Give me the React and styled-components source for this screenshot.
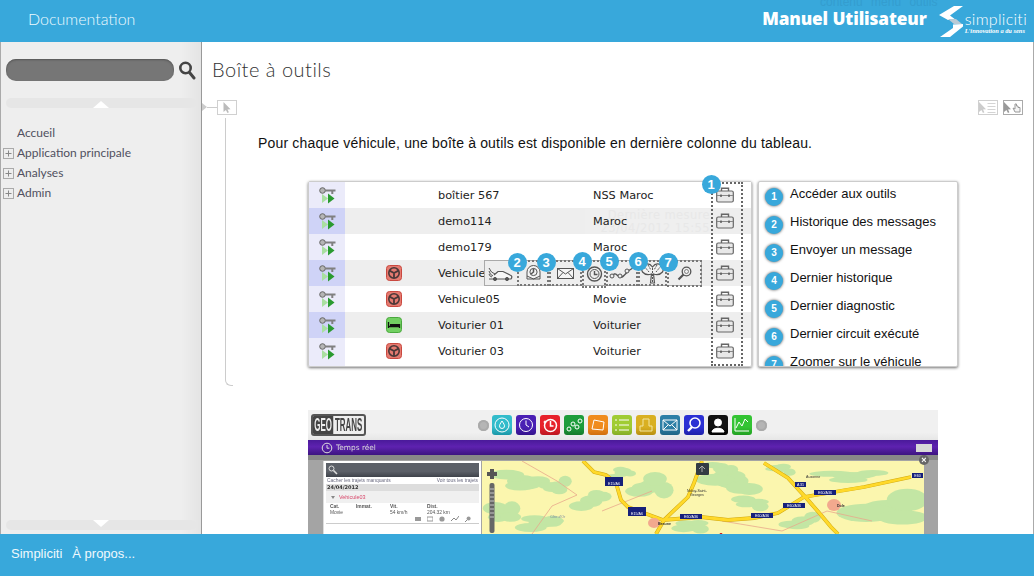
import React from 'react';
import styled, { createGlobalStyle } from 'styled-components';

const BLUE = '#38a8db';
const THIN = '"Lato", "Noto Sans", sans-serif';

const GlobalStyle = createGlobalStyle`
html, body { margin: 0; padding: 0; background: #fff; }
* { box-sizing: border-box; }
`;

const Page = styled.div`
display: flex;
flex-direction: column;
width: 1034px;
height: 576px;
overflow: hidden;
font-family: "Liberation Sans", Arial, sans-serif;
`;

const Header = styled.header`
position: relative;
display: flex;
align-items: center;
flex: 0 0 42px;
padding-left: 28px;
background: ${BLUE};
color: #fff;
overflow: hidden;
`;
const DocTitle = styled.div`
font-family: ${THIN};
font-weight: 300;
font-size: 16px;
margin-top: -6px;
color: #eefaff;
`;
const GhostTabs = styled.div`
position: absolute;
left: 820px;
top: -5px;
font-size: 12px;
word-spacing: 5px;
color: #349dcf;
`;
const Brand = styled.div`
position: relative;
display: flex;
align-items: center;
margin-left: auto;
padding-right: 7px;
`;
const ManualTitle = styled.div`
font-family: "Open Sans", sans-serif;
font-weight: 800;
font-size: 17.2px;
letter-spacing: -.1px;
margin-right: 12px;
margin-top: -6px;
white-space: nowrap;
`;
const BrandText = styled.div`
display: flex;
flex-direction: column;
margin-left: 2px;
`;
const BrandName = styled.div`
font-family: ${THIN};
font-weight: 300;
font-size: 16px;
line-height: 17px;
letter-spacing: .3px;
margin-top: 1px;
`;
const BrandTag = styled.div`
font-family: "Liberation Serif", serif;
font-style: italic;
font-weight: bold;
font-size: 6.4px;
line-height: 7px;
`;

const Main = styled.div`
display: flex;
flex: 1;
min-height: 0;
`;

const Sidebar = styled.aside`
display: flex;
flex-direction: column;
flex: 0 0 202px;
padding: 17px 5px 4px;
border-left: 1px solid #aaa;
border-right: 1px solid #999;
background: linear-gradient(to right, #eee 90%, #e4e4e4 100%);
`;
const SearchRow = styled.div`
display: flex;
align-items: center;
gap: 4px;
`;
const SearchInput = styled.div`
width: 168px;
height: 22px;
border-radius: 10px;
background: #767676;
box-shadow: inset 0 1px 2px #555;
`;
const ScrollBar = styled.div`
display: flex;
justify-content: center;
align-items: ${p => (p.$down ? 'flex-start' : 'flex-end')};
width: 190px;
height: 10px;
margin-top: ${p => (p.$down ? 'auto' : '17px')};
border-radius: 5px;
background: #e6e6e6;
`;
const Arrow = styled.div`
width: 0;
height: 0;
border-left: 8px solid transparent;
border-right: 8px solid transparent;
${p => (p.$down ? 'border-top: 7px solid #fff;' : 'border-bottom: 7px solid #fff;')}
`;
const Nav = styled.nav`
display: flex;
flex-direction: column;
margin: 14px 0 0 -3px;
`;
const NavItem = styled.div`
display: flex;
align-items: center;
height: 20px;
font-family: ${THIN};
font-size: 12px;
color: #505060;
`;
const PlusSlot = styled.span`
display: flex;
flex: 0 0 14px;
padding-top: 2px;
`;

const Content = styled.main`
flex: 1;
min-width: 0;
overflow: hidden;
border-right: 1px solid #aaa;
background: #fff;
`;
const PageTitle = styled.h1`
margin: 13px 0 17px 10px;
font-family: ${THIN};
font-weight: 300;
font-size: 20px;
line-height: 28px;
letter-spacing: .5px;
color: #333;
`;
const StepHead = styled.div`
display: flex;
align-items: flex-start;
height: 16px;
padding-right: 10px;
`;
const Notch = styled.div`
width: 0;
height: 0;
margin-top: 3px;
border-top: 4px solid transparent;
border-bottom: 4px solid transparent;
border-left: 5px solid #ccc;
`;
const NotchLine = styled.div`
width: 10px;
height: 1px;
margin-top: 7px;
background: #ccc;
`;
const CursorBox = styled.div`
display: flex;
align-items: center;
justify-content: center;
width: 20px;
height: 15px;
border: 1px solid ${p => p.$strong ? '#aaa' : '#d0d0d0'};
`;
const StepTools = styled.div`
display: flex;
gap: 5px;
margin-left: auto;
`;
const StepBody = styled.div`
display: flex;
margin: 2px 0 0 23px;
`;
const Rail = styled.div`
flex: 0 0 8px;
border-left: 1px solid #ccc;
border-bottom: 1px solid #ccc;
border-bottom-left-radius: 6px;
`;
const StepContent = styled.div`
flex: 1;
padding: 16px 0 19px 25px;
`;
const Lead = styled.p`
margin: 0 0 29px;
font-size: 14px;
line-height: 18px;
letter-spacing: .17px;
color: #111;
`;
const Figure = styled.div`
display: flex;
gap: 6px;
margin-left: 50px;
`;

const TableCard = styled.div`
position: relative;
width: 444px;
height: 186px;
border: 1px solid #ccc;
border-radius: 2px;
box-shadow: 0 1px 3px rgba(0,0,0,.55);
background: linear-gradient(to right, #ebebfa 36px, #fff 36px);
font-family: "DejaVu Sans", Verdana, sans-serif;
font-size: 11.3px;
color: #222;
`;
const Row = styled.div`
display: grid;
grid-template-columns: 36px 93px 155px 118px 40px;
align-items: center;
height: 26px;
background: ${p => (p.$even ? '#eee' : '#fff')};
`;
const KeyCell = styled.div`
display: flex;
align-items: center;
justify-content: center;
height: 100%;
background: ${p => (p.$even ? '#cfd3f7' : '#ebebfa')};
`;
const StatusCell = styled.div`
display: flex;
padding-left: 41px;
`;
const TextCell = styled.div`
position: relative;
z-index: 1;
white-space: nowrap;
`;
const ToolboxCell = styled.div`
display: flex;
padding-left: 5px;
`;
const GhostTip = styled.div`
position: absolute;
left: 276px;
top: 27px;
width: 128px;
padding-right: 3px;
font-size: 11.5px;
line-height: 12.5px;
letter-spacing: .4px;
text-align: right;
color: #e8e8e8;
background: #efefef;
white-space: nowrap;
overflow: hidden;
`;
const DottedColumn = styled.div`
position: absolute;
left: 402px;
top: 0;
bottom: 0;
width: 32px;
z-index: 2;
border: 2px dotted #666;
`;
const Bubble = styled.div`
position: absolute;
left: ${p => p.$dx}px;
top: ${p => p.$dy}px;
display: flex;
align-items: center;
justify-content: center;
width: 19px;
height: 19px;
border-radius: 50%;
background: ${BLUE};
color: #fff;
font-family: "Liberation Sans", sans-serif;
font-weight: bold;
font-size: 13px;
z-index: 5;
`;
const ToolPopup = styled.div`
position: absolute;
left: 175px;
top: 78px;
display: flex;
width: 218px;
height: 26px;
z-index: 3;
background: #eee;
box-shadow: inset 0 0 0 1px #aaa;
`;
const ToolCell = styled.div`
position: relative;
display: flex;
align-items: center;
justify-content: center;
flex: 0 0 ${p => p.$w}px;
height: ${p => p.$h || 26}px;
border: ${p => (p.$plain ? 'none' : '2px dotted #777')};
`;

const LegendCard = styled.div`
width: 200px;
height: 186px;
overflow: hidden;
padding-left: 6px;
border: 1px solid #ccc;
border-radius: 2px;
box-shadow: 0 1px 3px rgba(0,0,0,.55);
background: #fff;
`;
const LegendRow = styled.div`
display: flex;
gap: 7px;
height: 28px;
padding-top: 4px;
font-size: 13px;
line-height: 16px;
color: #111;
white-space: nowrap;
`;
const LegendBadge = styled.span`
display: flex;
align-items: center;
justify-content: center;
flex: 0 0 18px;
height: 18px;
margin-top: 2px;
border-radius: 50%;
background: ${BLUE};
box-shadow: 0 0 3px rgba(0,0,0,.7);
color: #fff;
font-weight: bold;
font-size: 10px;
`;

const Shot = styled.div`
width: 630px;
margin: 24px 0 0 106px;
filter: blur(.35px);
`;
const ShotBar = styled.div`
display: flex;
align-items: center;
height: 30px;
padding-left: 3px;
background: linear-gradient(#f0f0f0 75%, #e6e6e6);
`;
const GeoLogo = styled.div`
flex: 0 0 55px;
height: 22px;
overflow: hidden;
border: 2px solid #555;
border-radius: 3px;
background: #eee;
`;
const GeoWord = styled.div`
display: flex;
width: 120px;
transform: scaleX(.44);
transform-origin: left center;
font-family: "Liberation Sans", sans-serif;
font-weight: bold;
font-size: 18px;
line-height: 18px;
color: #444;
`;
const GeoBadge = styled.span`
background: #444;
color: #eee;
padding: 0 3px;
margin-right: 4px;
`;
const ShotNav = styled.div`
flex: 0 0 11px;
height: 11px;
margin: ${p => p.$margin};
border-radius: 50%;
background: #b5b5b5;
box-shadow: inset 0 0 0 2px #aaa;
`;
const TileRow = styled.div`
display: flex;
gap: 4px;
`;
const Tile = styled.div`
display: flex;
align-items: center;
justify-content: center;
width: 20px;
height: 20px;
border-radius: 3px;
background: linear-gradient(${p => p.$color} 60%, ${p => p.$dark});
`;
const ShotTitle = styled.div`
display: flex;
align-items: center;
gap: 3px;
height: 15px;
padding: 0 6px 0 13px;
background: linear-gradient(#4a1a9a, #5e22b0 45%, #3c1480);
color: #ddd;
font-family: "DejaVu Sans", sans-serif;
font-size: 7.4px;
`;
const ShotButton = styled.div`
width: 16px;
height: 8px;
margin-left: auto;
background: #d8d8d8;
`;
const ShotBody = styled.div`
position: relative;
display: flex;
height: 90px;
padding: 6px 0 0 15px;
background: linear-gradient(#888 5px, #a4a4a4 5px);
`;
const CloseDot = styled.div`
position: absolute;
right: 9px;
top: 0;
display: flex;
align-items: center;
justify-content: center;
width: 10px;
height: 10px;
border-radius: 50%;
background: #666;
color: #fff;
font-size: 9px;
font-weight: bold;
`;
const Panel = styled.div`
flex: 0 0 158px;
padding: 2px;
background: #fff;
border-left: 1px solid #ddd;
color: #555;
font-family: "Liberation Sans", sans-serif;
font-size: 4.9px;
`;
const PanelHead = styled.div`
display: flex;
align-items: center;
height: 14px;
padding-left: 2px;
background: linear-gradient(#5c6068 60%, #3f434b);
`;
const PanelLinks = styled.div`
display: flex;
justify-content: space-between;
padding: 1px 1px 0;
height: 7px;
color: #6a6a80;
`;
const PanelDate = styled.div`
height: 7px;
padding-left: 1px;
background: #ddd;
font-family: "DejaVu Sans", sans-serif;
font-weight: bold;
font-size: 5px;
line-height: 7px;
color: #333;
`;
const PanelVehicle = styled.div`
display: flex;
align-items: center;
gap: 4px;
height: 12px;
padding-left: 5px;
background: #f0f0f0;
font-size: 5.4px;
color: #d8476a;
&::before {
  content: "";
  border-left: 2px solid transparent;
  border-right: 2px solid transparent;
  border-top: 3px solid #888;
}
`;
const PanelCols = styled.div`
display: grid;
grid-template-columns: 26px 34px 37px 1fr;
padding: 1px 4px;
line-height: 5.5px;
`;
const PanelIcons = styled.div`
display: flex;
justify-content: flex-end;
gap: 6px;
height: 8px;
padding-right: 8px;
border-bottom: 1px solid #ccc;
`;
const MapFrame = styled.div`
flex: 0 0 442px;
margin-left: 1px;
`;

const Footer = styled.footer`
display: flex;
align-items: center;
gap: 10px;
flex: 0 0 42px;
padding: 0 0 4px 11px;
background: ${BLUE};
color: #f0f9fd;
font-size: 13px;
`;

const Search = () => (
  <svg width="18" height="20" viewBox="0 0 18 20">
    <circle cx="7.5" cy="8" r="5.2" fill="none" stroke="#444" strokeWidth="2.6" />
    <path d="M11.5 12.5 16 18" stroke="#444" strokeWidth="3" strokeLinecap="round" />
  </svg>
);
const Plus = () => (
  <svg width="11" height="11" viewBox="0 0 11 11">
    <rect x=".5" y=".5" width="10" height="10" fill="none" stroke="#aaa" />
    <path d="M2.5 5.5h6M5.5 2.5v6" stroke="#888" />
  </svg>
);
const Cursor = ({ fill = '#bbb' }) => (
  <path d="M0 0 L0 10 L2.4 8 L4 11 L5.4 10.3 L4 7.4 L7 7.2 Z" fill={fill} />
);
const CursorIcon = () => (
  <svg width="9" height="12" viewBox="0 0 8 12"><Cursor /></svg>
);
const CursorList = () => (
  <svg width="18" height="12" viewBox="0 0 18 12">
    <Cursor fill="#ccc" />
    <path d="M8.5 1.5h8M8.5 4.5h8M8.5 7.5h8M8.5 10.5h8" stroke="#d4d4d4" />
  </svg>
);
const CursorHand = () => (
  <svg width="18" height="12" viewBox="0 0 18 12">
    <Cursor fill="#999" />
    <path d="M11 2v5l-2-1 2 4h5V5.5h-2V4h-1.5V2z" fill="#f4f4f4" stroke="#999" />
  </svg>
);
const SLogo = () => (
  <svg width="24" height="31" viewBox="0 0 24 31">
    <path d="M15 0 H24 L11 9.5 L17 14 H9 L0 9 Z" fill="#fff" />
    <path d="M9 13 H17 L23 18 H15 Z" fill="#b9cbd6" />
    <path d="M24 18 V20.5 L11 31 H1 L14 22 L14 18.5 Z" fill="#fff" />
  </svg>
);

const KeyIcon = () => (
  <svg width="17" height="17" viewBox="0 0 17 17">
    <path d="M3 7 L9 11.5 L3 16Z" fill="#a9e0a0" />
    <path d="M9 6.5 L15.5 11.5 L9 16.5Z" fill="#2a9a30" />
    <circle cx="3.5" cy="3.5" r="2.8" fill="#b5b5b5" stroke="#666" />
    <path d="M6 2.6h10.5v2h-2.2v2.4h-2V4.6H6z" fill="#808080" />
  </svg>
);
const Wheel = () => (
  <svg width="16" height="16" viewBox="0 0 16 16">
    <rect x=".5" y=".5" width="15" height="15" rx="3" fill="#e57a70" stroke="#c9483f" />
    <circle cx="8" cy="8" r="5.2" fill="none" stroke="#4a3838" strokeWidth="1.6" />
    <path d="M8 8V13M8 8 3.4 5.6M8 8 12.6 5.6" stroke="#4a3838" strokeWidth="1.8" />
  </svg>
);
const Bed = () => (
  <svg width="16" height="16" viewBox="0 0 16 16">
    <rect x=".5" y=".5" width="15" height="15" rx="3" fill="#72d062" stroke="#4aa83e" />
    <path d="M2.5 5v6M13.5 7v4M2.5 9.5h11" stroke="#111" strokeWidth="1.3" fill="none" />
    <rect x="4" y="7" width="9" height="2" fill="#111" />
  </svg>
);
const Toolbox = () => (
  <svg width="18" height="16" viewBox="0 0 18 16">
    <path d="M5.5 4V1.2h7V4" fill="none" stroke="#666" strokeWidth="1.4" />
    <rect x=".7" y="4" width="16.6" height="11" rx="1.5" fill="#e8e8e8" stroke="#666" strokeWidth="1.2" />
    <path d="M1 8.5h16" stroke="#888" />
    <path d="M5 7.5v2.5M13 7.5v2.5" stroke="#555" strokeWidth="1.4" />
  </svg>
);

const ToolSvg = ({ w = 20, h = 16, children }) => (
  <svg width={w} height={h} viewBox={`0 0 ${w} ${h}`} fill="none" stroke="#555" strokeWidth="1">
    {children}
  </svg>
);
const CarIcon = () => (
  <ToolSvg w={25} h={15}>
    <path d="M1 13 H23 Q25 10 22 9 L15 5.5 H10 L6 9" fill="#f6f6f6" strokeWidth="1.2" />
    <circle cx="7" cy="13" r="1.6" fill="#555" />
    <circle cx="19" cy="13" r="1.6" fill="#555" />
    <path d="M1 2 Q3 7 7 8M1 5 Q2 9 5 10M1 8 Q2 11 4 11" />
  </ToolSvg>
);
const DialIcon = () => (
  <ToolSvg w={15} h={16}>
    <path d="M1 14 V7 A6.5 6.5 0 0 1 14 7 V14 Z" fill="#f4f4f4" />
    <circle cx="7.5" cy="7" r="3.6" />
    <path d="M7.5 3.5V7L5 9" strokeWidth="1.5" />
    <path d="M1 11 L7.5 14 L14 11" />
  </ToolSvg>
);
const MailIcon = () => (
  <ToolSvg w={17} h={11}>
    <rect x=".5" y=".5" width="16" height="10" fill="#f6f6f6" />
    <path d="M.5 .5 8.5 6 16.5 .5M.5 10.5 6 4.5M16.5 10.5 11 4.5" />
  </ToolSvg>
);
const ClockIcon = () => (
  <ToolSvg w={17} h={16}>
    <circle cx="8.5" cy="8" r="7" strokeWidth="1.4" />
    <circle cx="8.5" cy="8" r="4.5" />
    <path d="M8.5 5v3.5h3" strokeWidth="1.4" />
  </ToolSvg>
);
const TrackIcon = () => (
  <ToolSvg w={26} h={14}>
    <path d="M3 11 Q5 6 8 9 T13 11 T19 5 L24 2" strokeWidth="1.4" />
    <circle cx="3" cy="10" r="2" fill="#eee" />
    <circle cx="11" cy="10" r="2" fill="#eee" />
    <circle cx="18" cy="5" r="2" fill="#eee" />
  </ToolSvg>
);
const RoadIcon = () => (
  <ToolSvg w={25} h={22}>
    <path d="M10.5 21 L11.5 12 Q6 14 2.5 10 Q0 5 4 3 Q9 0 12.5 5 Q16 0 21 3 Q25 5 22.5 10 Q19 14 13.5 12 L14.5 21Z" fill="#f2f2f2" strokeWidth="1.2" />
    <path d="M4 4 9 10M8 3 11 8M21 4 16 10M17 3 14 8M12.5 6V20" strokeDasharray="2 1" />
  </ToolSvg>
);
const LensIcon = () => (
  <ToolSvg w={15} h={15}>
    <circle cx="9.5" cy="5.5" r="4.3" strokeWidth="1.3" />
    <circle cx="9.5" cy="5.5" r="2" strokeWidth=".7" />
    <path d="M6.5 8.5 1.5 13.5" strokeWidth="2.2" />
  </ToolSvg>
);

const TILE_ICONS = {
  gauge: <><circle cx="9" cy="9" r="7" /><path d="M9 5c-2 3-2.5 4-2.5 5a2.5 2.5 0 0 0 5 0c0-1-.5-2-2.5-5z" /></>,
  clock: <><circle cx="9" cy="9" r="6.5" /><path d="M9 4.5V9l3 2" /></>,
  history: <><circle cx="9.5" cy="9.5" r="6" strokeWidth="1.5" /><path d="M9.5 5v5h3" strokeWidth="1.5" /><circle cx="4" cy="6" r="1" fill="#fff" /></>,
  graph: <><circle cx="4" cy="13" r="2" /><circle cx="8" cy="8" r="2" /><circle cx="12" cy="11" r="2" /><circle cx="15" cy="5" r="2" /></>,
  shape: <path d="M5 4 L15 6 L14 14 L3 13Z" />,
  list: <path d="M2 4h2M6 4h10M2 9h2M6 9h10M2 14h2M6 14h10" />,
  tray: <path d="M6 3v7H3v5h12v-5h-3V3z" stroke="#f3e6a0" />,
  mail: <path d="M2 4h14v10H2zM2 4l7 6 7-6M2 14l5-5M16 14l-5-5" />,
  search: <><circle cx="10" cy="7" r="5" strokeWidth="1.6" /><path d="M7 11l-4 4" strokeWidth="2.4" /></>,
  user: <path d="M9 3a3 3 0 1 1 0 7 3 3 0 1 1 0-7M3 16c0-5 12-5 12 0z" fill="#fff" />,
  chart: <path d="M2 2v13h14M3 12l3-6 3 4 3-7 3 3" />,
};
const TILES = [
  ['#33bccb', '#1a97a8', 'gauge'],
  ['#4a1fb4', '#34148c', 'clock'],
  ['#e7212b', '#bb1720', 'history'],
  ['#1e9d3c', '#147a2b', 'graph'],
  ['#f08c1e', '#d06f10', 'shape'],
  ['#a0cc34', '#84ad26', 'list'],
  ['#d9b022', '#b78f12', 'tray'],
  ['#2e7fa6', '#1f6486', 'mail'],
  ['#2b30d4', '#1d20aa', 'search'],
  ['#111', '#000', 'user'],
  ['#33c433', '#22a022', 'chart'],
];

const ROADS = [
  'M101 0 L112 11 L124 14 L134 22 L139 39 L146 46 L162 52 L181 59 L219 56 L246 59 L272 57 L296 52 L322 36 L352 31 L382 26 L429 16',
  'M220 0 L212 22 L206 36 L182 59 L174 73',
  'M282 2 L306 17 L326 39 L339 54 L349 66 L356 73',
];
const BLOBS = [
  [40, 20, 20, 8], [22, 50, 14, 8], [75, 25, 11, 6], [110, 40, 14, 8], [60, 62, 18, 6],
  [170, 25, 16, 9], [250, 20, 22, 10], [270, 42, 14, 5], [240, 8, 12, 5], [370, 15, 26, 5],
  [405, 48, 34, 12], [320, 60, 14, 6], [140, 12, 10, 5], [210, 66, 14, 5], [300, 8, 10, 4],
];
// breaks each patch of green into a few uneven lobes
const LOBES = BLOBS.flatMap(([cx, cy, rx, ry], i) => [0, 1, 2, 3].map(k => ({
  cx: cx + Math.cos(i * 2.1 + k * 1.7) * rx * .8,
  cy: cy + Math.sin(i * 1.3 + k * 2.3) * ry * .8,
  rx: rx * (.6 + ((i + k) % 3) * .14),
  ry: ry * (.6 + ((i * k) % 3) * .16),
})));
const SHIELDS = [
  [123, 16, 18, 9, 'E15/A6'], [146, 46, 18, 9, 'E15/A6'], [198, 53, 22, 5, 'E60/A36'], [269, 52, 22, 5, 'E60/A36'],
  [301, 42, 22, 5, 'E60/A36'], [332, 29, 22, 5, 'E60/A36'], [313, 21, 11, 5, 'A 31'], [430, 12, 11, 5, 'E60'],
];

const MapArt = () => (
  <svg width="442" height="90" viewBox="0 0 442 90">
    <rect width="442" height="90" fill="#fbf6ae" />
    {BLOBS.map(([cx, cy, rx, ry]) => (
      <ellipse key={`${cx}${cy}`} cx={cx} cy={cy} rx={rx * .75} ry={ry * .75} fill="#c3e6a4" />
    ))}
    {LOBES.map((b, i) => <ellipse key={i} {...b} fill="#c3e6a4" />)}
    <path d="M40 0 L75 20 L95 34 L70 45 L50 73M170 30 L120 50M240 60 L300 70M390 60 L345 50 L300 70" fill="none" stroke="#e8a88c" strokeWidth=".8" />
    {ROADS.map(d => <path key={d} d={d} fill="none" stroke="#d0a810" strokeWidth="3.8" />)}
    {ROADS.map(d => <path key={`${d}y`} d={d} fill="none" stroke="#ffd92a" strokeWidth="2.8" />)}
    <ellipse cx="172" cy="62" rx="6" ry="5" fill="#f2a98e" />
    <ellipse cx="352" cy="44" rx="7" ry="6" fill="#f2a98e" />
    {SHIELDS.map(([x, y, w, h, t]) => (
      <g key={`${x}${y}`}>
        <rect x={x} y={y} width={w} height={h} fill="#16207a" />
        <text x={x + w / 2} y={y + h - 1} fontSize="3.6" textAnchor="middle" fill="#fff" fontFamily="Liberation Sans">{t}</text>
      </g>
    ))}
    <rect x="214" y="2" width="13" height="12" rx="1" fill="#333c44" />
    <path d="M220 5v6M217 8l3-3 3 3" stroke="#aaa" fill="none" />
    <g fontFamily="Liberation Sans" fontSize="3.6" fill="#333">
      <text x="205" y="31">Nolay-Saint-</text>
      <text x="208" y="35">Georges</text>
      <text x="176" y="63.5" fontWeight="bold">Beaune</text>
      <text x="355" y="46" fontWeight="bold">Dole</text>
      <text x="324" y="17">Auxonne</text>
      <text x="68" y="57" fill="#7a8aa0">Côte d'Or</text>
    </g>
    <path d="M5 11h3V8h4v3h3v4h-3v3H8v-3H5z" fill="#555" />
    <rect x="7.5" y="22" width="5" height="50" rx="2" fill="#666" />
    <path d="M8 28h4M8 32h4M8 36h4M8 40h4M8 44h4M8 48h4M8 52h4M8 56h4" stroke="#ddd" strokeWidth=".8" />
    <path d="M239 72v6" stroke="#d02020" strokeWidth="2.4" />
  </svg>
);

const vehicles = [
  { name: 'boîtier 567', group: 'NSS Maroc' },
  { name: 'demo114', group: 'Maroc' },
  { name: 'demo179', group: 'Maroc' },
  { name: 'Vehicule04', group: '', status: 'wheel' },
  { name: 'Vehicule05', group: 'Movie', status: 'wheel' },
  { name: 'Voiturier 01', group: 'Voiturier', status: 'bed' },
  { name: 'Voiturier 03', group: 'Voiturier', status: 'wheel' },
];

const tools = [
  { w: 33, plain: true, icon: <CarIcon /> },
  { w: 32, icon: <DialIcon />, n: 2, dx: -11.5, dy: -9.5 },
  { w: 33, icon: <MailIcon />, n: 3, dx: -14.5, dy: -9.5 },
  { w: 24, h: 28, icon: <ClockIcon />, n: 4, dx: -11.5, dy: -10.5 },
  { w: 32, icon: <TrackIcon />, n: 5, dx: -8.5, dy: -10.5 },
  { w: 29, icon: <RoadIcon />, n: 6, dx: -11.5, dy: -10.5 },
  { w: 35, h: 27, icon: <LensIcon />, n: 7, dx: -10.5, dy: -9.5 },
];

const legend = [
  'Accéder aux outils',
  'Historique des messages',
  'Envoyer un message',
  'Dernier historique',
  'Dernier diagnostic',
  'Dernier circuit exécuté',
  'Zoomer sur le véhicule',
];

const App = () => (
  <Page>
    <GlobalStyle />
    <Header>
      <DocTitle>Documentation</DocTitle>
      <GhostTabs>contenu menu outils</GhostTabs>
      <Brand>
        <ManualTitle>Manuel Utilisateur</ManualTitle>
        <SLogo />
        <BrandText>
          <BrandName>simpliciti</BrandName>
          <BrandTag>L'innovation a du sens</BrandTag>
        </BrandText>
      </Brand>
    </Header>
    <Main>
      <Sidebar>
        <SearchRow>
          <SearchInput />
          <Search />
        </SearchRow>
        <ScrollBar><Arrow /></ScrollBar>
        <Nav>
          <NavItem><PlusSlot />Accueil</NavItem>
          <NavItem><PlusSlot><Plus /></PlusSlot>Application principale</NavItem>
          <NavItem><PlusSlot><Plus /></PlusSlot>Analyses</NavItem>
          <NavItem><PlusSlot><Plus /></PlusSlot>Admin</NavItem>
        </Nav>
        <ScrollBar $down><Arrow $down /></ScrollBar>
      </Sidebar>
      <Content>
        <PageTitle>Boîte à outils</PageTitle>
        <StepHead>
          <Notch />
          <NotchLine />
          <CursorBox><CursorIcon /></CursorBox>
          <StepTools>
            <CursorBox><CursorList /></CursorBox>
            <CursorBox $strong><CursorHand /></CursorBox>
          </StepTools>
        </StepHead>
        <StepBody>
          <Rail />
          <StepContent>
            <Lead>Pour chaque véhicule, une boîte à outils est disponible en dernière colonne du tableau.</Lead>
            <Figure>
              <TableCard>
                <GhostTip>Dernière mesure<br />23/04/2012 15:55</GhostTip>
                {vehicles.map((v, i) => (
                  <Row key={v.name} $even={i % 2 === 1}>
                    <KeyCell $even={i % 2 === 1}><KeyIcon /></KeyCell>
                    <StatusCell>
                      {v.status === 'wheel' && <Wheel />}
                      {v.status === 'bed' && <Bed />}
                    </StatusCell>
                    <TextCell>{v.name}</TextCell>
                    <TextCell>{v.group}</TextCell>
                    <ToolboxCell><Toolbox /></ToolboxCell>
                  </Row>
                ))}
                <DottedColumn>
                  <Bubble $dx={-11.5} $dy={-9.5}>1</Bubble>
                </DottedColumn>
                <ToolPopup>
                  {tools.map((t, i) => (
                    <ToolCell key={i} $w={t.w} $h={t.h} $plain={t.plain}>
                      {t.icon}
                      {t.n && <Bubble $dx={t.dx} $dy={t.dy}>{t.n}</Bubble>}
                    </ToolCell>
                  ))}
                </ToolPopup>
              </TableCard>
              <LegendCard>
                {legend.map((label, i) => (
                  <LegendRow key={label}>
                    <LegendBadge>{i + 1}</LegendBadge>
                    {label}
                  </LegendRow>
                ))}
              </LegendCard>
            </Figure>
          </StepContent>
        </StepBody>
        <Shot>
          <ShotBar>
            <GeoLogo><GeoWord><GeoBadge>GEO</GeoBadge>TRANS</GeoWord></GeoLogo>
            <ShotNav $margin="0 3px 0 112px" />
            <TileRow>
              {TILES.map(([color, dark, icon]) => (
                <Tile key={icon} $color={color} $dark={dark}>
                  <svg width="18" height="18" viewBox="0 0 18 18" fill="none" stroke="#fff" strokeWidth="1">
                    {TILE_ICONS[icon]}
                  </svg>
                </Tile>
              ))}
            </TileRow>
            <ShotNav $margin="0 0 0 4px" />
          </ShotBar>
          <ShotTitle>
            <svg width="12" height="12" viewBox="0 0 12 12" fill="none" stroke="#ddd">
              <circle cx="6" cy="6" r="4.8" />
              <path d="M6 3v3.2h2.4" />
            </svg>
            Temps réel
            <ShotButton />
          </ShotTitle>
          <ShotBody>
            <Panel>
              <PanelHead>
                <svg width="10" height="10" viewBox="0 0 10 10" fill="none" stroke="#ddd">
                  <circle cx="3.5" cy="3.5" r="2.5" />
                  <path d="M5.5 5.5 9 9" strokeWidth="1.6" />
                </svg>
              </PanelHead>
              <PanelLinks>
                <span>Cacher les trajets manquants</span>
                <span>Voir tous les trajets</span>
              </PanelLinks>
              <PanelDate>24/04/2012</PanelDate>
              <PanelVehicle>Vehicule03</PanelVehicle>
              <PanelCols>
                <b>Cat.</b><b>Immat.</b><b>Vit.</b><b>Dist.</b>
                <span>Movie</span><span />
                <span>54 km/h</span><span>204.32 km</span>
              </PanelCols>
              <PanelIcons>
                <svg width="6" height="6" viewBox="0 0 6 6"><rect y="1" width="6" height="4" fill="#999" /></svg>
                <svg width="6" height="6" viewBox="0 0 6 6"><rect y="1" width="6" height="4" fill="none" stroke="#999" /></svg>
                <svg width="6" height="6" viewBox="0 0 6 6"><circle cx="3" cy="3" r="2.6" fill="#999" /></svg>
                <svg width="8" height="6" viewBox="0 0 8 6"><path d="M0 5 3 2 5 4 8 0" fill="none" stroke="#888" /></svg>
                <svg width="6" height="6" viewBox="0 0 6 6"><circle cx="3.6" cy="2.4" r="2" fill="#999" /><path d="M2 4 0 6" stroke="#888" /></svg>
              </PanelIcons>
            </Panel>
            <MapFrame><MapArt /></MapFrame>
            <CloseDot>×</CloseDot>
          </ShotBody>
        </Shot>
      </Content>
    </Main>
    <Footer>
      <span>Simpliciti</span>
      <span>À propos...</span>
    </Footer>
  </Page>
);

export default App;
